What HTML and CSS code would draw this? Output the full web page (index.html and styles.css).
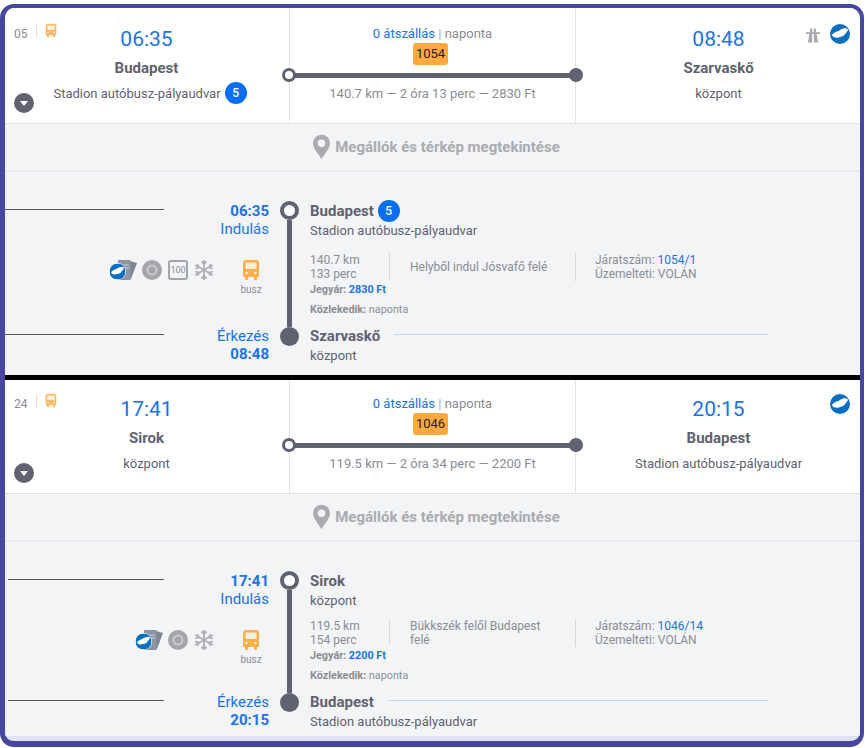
FILE: index.html
```html
<!DOCTYPE html>
<html>
<head>
    <title>Menetrend</title>
    <link rel="stylesheet" href="styles.css">
</head>
<body>
    <svg class="sprites" width="0" height="0">
        <symbol id="bus" viewBox="0 0 18 20">
            <path fill="#fcae4b" d="M4 0h10a3 3 0 0 1 3 3v13a1 1 0 0 1-1 1h-1v2a1 1 0 0 1-1 1h-1a1 1 0 0 1-1-1v-2H6v2a1 1 0 0 1-1 1H4a1 1 0 0 1-1-1v-2H2a1 1 0 0 1-1-1V3a3 3 0 0 1 3-3z"/>
            <path fill="#ffeeda" d="M3.500 2.500h11v6.500h-11z"/>
            <circle fill="#ffeeda" cx="4.500" cy="13" r="1.300"/>
            <circle fill="#ffeeda" cx="13.500" cy="13" r="1.300"/>
        </symbol>
        <symbol id="hungary" viewBox="0 0 20 20">
            <circle fill="#0a6fc2" cx="10" cy="10" r="10"/>
            <path fill="#fff" d="M2 11c.8-1.500 2-2 3.500-3 1.500-.8 3-.7 4.500-2 1.800-1.200 4.500-2 6.500-1.500 1.500.4 1.800 1.500.8 2.800-1 1.200-1.800 2.200-2.800 3.500-1.200 1.500-3 1.700-5 2.400-1.800.6-3.800.8-5.300.1C3.300 13.300 2.300 12.200 2 11z"/>
        </symbol>
        <symbol id="highway" viewBox="0 0 15 15">
            <path fill="#a9abb0" d="M4.500 0h2.200v4h1.600V0h2.200l.5 4H15v2h-3.600L13 15H8.400V6H6.600v9H2L3.600 6H0V4h4z"/>
        </symbol>
        <symbol id="ticket" viewBox="0 0 28 20">
            <path fill="#7f8794" d="M21 1l7 2-6 16-5-1z"/>
            <path fill="#8f96a3" d="M9 0h12.500v20H9z"/>
            <path stroke="#c9ccd2" d="M15 5h5M15 8h5"/>
            <circle fill="#fff" cx="8.500" cy="11.500" r="8.500"/>
            <use href="#hungary" x="0.500" y="3.500" width="16" height="16"/>
        </symbol>
        <symbol id="disc" viewBox="0 0 20 20">
            <circle fill="#a3a5a9" cx="10" cy="10" r="10"/>
            <circle fill="none" stroke="#c9cbcf" stroke-width="2" cx="10" cy="10" r="4.500"/>
        </symbol>
        <symbol id="snow" viewBox="0 0 20 20">
            <g fill="none" stroke="#aeb0b5" stroke-width="1.800">
                <path d="M10 0v20M1.300 5l17.400 10M1.300 15l17.400-10"/>
                <path d="M7.500 1.500L10 4l2.500-2.500M7.500 18.500L10 16l2.500 2.500"/>
                <path d="M1.200 8.500l3.400-.9-.9-3.400M18.800 11.500l-3.400.9.900 3.400M1.200 11.500l3.400.9-.9 3.400M18.800 8.500l-3.400-.9.900-3.400"/>
            </g>
        </symbol>
    </svg>

    <div class="frame">
        <div class="trip">
            <div class="summary">
                <div class="end end-from">
                    <div class="line-no"><span>05</span><svg class="bus-small"><use href="#bus"/></svg></div>
                    <div class="toggle"></div>
                    <div class="clock">06:35</div>
                    <div class="city">Budapest</div>
                    <div class="stop stop-shift">Stadion autóbusz-pályaudvar <span class="platform">5</span></div>
                </div>
                <div class="middle">
                    <div class="changes"><span class="blue">0 átszállás</span> <span class="pipe">|</span> naponta</div>
                    <div class="route-no">1054</div>
                    <div class="track"></div>
                    <div class="totals">140.7 km — 2 óra 13 perc — 2830 Ft</div>
                </div>
                <div class="end end-to">
                    <div class="badges"><svg class="icon-highway"><use href="#highway"/></svg><svg class="icon-hu"><use href="#hungary"/></svg></div>
                    <div class="clock">08:48</div>
                    <div class="city">Szarvaskő</div>
                    <div class="stop">központ</div>
                </div>
            </div>
            <div class="map-link">
                <svg class="pin" viewBox="0 0 18 26"><path fill="#a9abb0" fill-rule="evenodd" d="M9 0a9 9 0 0 1 9 9c0 6-6 11-9 17C6 20 0 15 0 9a9 9 0 0 1 9-9zm0 5a4 4 0 1 0 0 8 4 4 0 0 0 0-8z"/></svg>
                Megállók és térkép megtekintése
            </div>
            <div class="detail detail-first">
                <div class="side dep">
                    <div class="rule"></div>
                    <div class="times"><b>06:35</b><br>Indulás</div>
                </div>
                <div class="axis"><i class="ring"></i><i class="bar"></i><i class="dot"></i></div>
                <div class="place">
                    <div class="place-name">Budapest <span class="platform">5</span></div>
                    <div class="place-sub">Stadion autóbusz-pályaudvar</div>
                </div>
                <div class="services">
                    <svg class="svc-ticket"><use href="#ticket"/></svg>
                    <svg class="svc"><use href="#disc"/></svg>
                    <span class="limit">100</span>
                    <svg class="svc"><use href="#snow"/></svg>
                    <div class="vehicle"><svg class="bus-big"><use href="#bus"/></svg><span>busz</span></div>
                </div>
                <div class="info">
                    <div class="info-row">
                        <div class="info-a">140.7 km<br>133 perc</div>
                        <div class="info-b">Helyből indul Jósvafő felé</div>
                        <div class="info-c">Járatszám: <span class="blue">1054/1</span><br>Üzemelteti: VOLÁN</div>
                    </div>
                    <div class="price"><b>Jegyár:</b> <b class="blue">2830 Ft</b></div>
                    <div class="runs"><b>Közlekedik:</b> naponta</div>
                </div>
                <div class="side arr">
                    <div class="rule"></div>
                    <div class="times">Érkezés<br><b>08:48</b></div>
                </div>
                <div class="place">
                    <div class="place-name">Szarvaskő<i class="thin"></i></div>
                    <div class="place-sub">központ</div>
                </div>
            </div>
        </div>

        <div class="trip">
            <div class="summary">
                <div class="end end-from">
                    <div class="line-no"><span>24</span><svg class="bus-small"><use href="#bus"/></svg></div>
                    <div class="toggle"></div>
                    <div class="clock">17:41</div>
                    <div class="city">Sirok</div>
                    <div class="stop">központ</div>
                </div>
                <div class="middle">
                    <div class="changes"><span class="blue">0 átszállás</span> <span class="pipe">|</span> naponta</div>
                    <div class="route-no">1046</div>
                    <div class="track"></div>
                    <div class="totals">119.5 km — 2 óra 34 perc — 2200 Ft</div>
                </div>
                <div class="end end-to">
                    <div class="badges"><svg class="icon-hu"><use href="#hungary"/></svg></div>
                    <div class="clock">20:15</div>
                    <div class="city">Budapest</div>
                    <div class="stop">Stadion autóbusz-pályaudvar</div>
                </div>
            </div>
            <div class="map-link">
                <svg class="pin" viewBox="0 0 18 26"><path fill="#a9abb0" fill-rule="evenodd" d="M9 0a9 9 0 0 1 9 9c0 6-6 11-9 17C6 20 0 15 0 9a9 9 0 0 1 9-9zm0 5a4 4 0 1 0 0 8 4 4 0 0 0 0-8z"/></svg>
                Megállók és térkép megtekintése
            </div>
            <div class="detail detail-second">
                <div class="side dep">
                    <div class="rule"></div>
                    <div class="times"><b>17:41</b><br>Indulás</div>
                </div>
                <div class="axis"><i class="ring"></i><i class="bar"></i><i class="dot"></i></div>
                <div class="place">
                    <div class="place-name">Sirok</div>
                    <div class="place-sub">központ</div>
                </div>
                <div class="services">
                    <svg class="svc-ticket"><use href="#ticket"/></svg>
                    <svg class="svc"><use href="#disc"/></svg>
                    <svg class="svc"><use href="#snow"/></svg>
                    <div class="vehicle"><svg class="bus-big"><use href="#bus"/></svg><span>busz</span></div>
                </div>
                <div class="info">
                    <div class="info-row">
                        <div class="info-a">119.5 km<br>154 perc</div>
                        <div class="info-b">Bükkszék felől Budapest felé</div>
                        <div class="info-c">Járatszám: <span class="blue">1046/14</span><br>Üzemelteti: VOLÁN</div>
                    </div>
                    <div class="price"><b>Jegyár:</b> <b class="blue">2200 Ft</b></div>
                    <div class="runs"><b>Közlekedik:</b> naponta</div>
                </div>
                <div class="side arr">
                    <div class="rule"></div>
                    <div class="times">Érkezés<br><b>20:15</b></div>
                </div>
                <div class="place">
                    <div class="place-name">Budapest<i class="thin"></i></div>
                    <div class="place-sub">Stadion autóbusz-pályaudvar</div>
                </div>
            </div>
        </div>
    </div>
</body>
</html>
```

FILE: styles.css
```css
:root {
    --frame: #46479e;
    --panel: #f2f4f6;
    --divider: #e0e2e6;
    --dark: #5f6270;
    --muted: #8a8d94;
    --blue: #1a73e8;
    --orange: #ffa940;
}

body {
    margin: 0;
    background: white;
    font-family: Roboto, sans-serif;
    color: var(--dark);
}

.sprites {
    display: block;
}

.blue {
    color: var(--blue);
}

.frame {
    box-sizing: border-box;
    width: 864px;
    height: 743px;
    margin-top: 4px;
    border: 4px solid var(--frame);
    border-width: 4px 4px 6px 5px;
    border-radius: 14px;
    background: #e0e2f2;
    overflow: hidden;
}

.trip + .trip {
    border-top: 5px solid black;
}

/* Summary row */
.summary {
    display: grid;
    grid-template-columns: 284px 287px 1fr;
    height: 115px;
    background: white;
    border-bottom: 1px solid var(--divider);
}

.trip + .trip .summary {
    height: 113px;
}

.end {
    position: relative;
    display: flex;
    flex-direction: column;
    align-items: center;
    padding-top: 19px;
}

.end-from {
    padding-right: 1px;
}

.end-to {
    padding-left: 1px;
}

.trip + .trip .end {
    padding-top: 17px;
}

.clock {
    height: 24px;
    line-height: 24px;
    font-size: 21px;
    color: var(--blue);
}

.city {
    margin-top: 8px;
    line-height: 18px;
    font-size: 15px;
    font-weight: 700;
}

.stop {
    display: flex;
    align-items: center;
    gap: 4px;
    height: 22px;
    margin-top: 5px;
    font-size: 13px;
}

.stop-shift {
    margin-left: 7px;
}

.platform {
    display: inline-block;
    width: 22px;
    height: 22px;
    line-height: 22px;
    border-radius: 50%;
    background: #0a6ef5;
    color: white;
    font-size: 12px;
    font-weight: 500;
    text-align: center;
}

.line-no {
    position: absolute;
    top: 16px;
    left: 9px;
    display: flex;
    align-items: flex-start;
    font-size: 12px;
    line-height: 20px;
    color: var(--muted);
}

.trip + .trip .line-no {
    top: 14px;
}

.line-no span {
    height: 14px;
    line-height: 20px;
    padding-right: 8px;
    border-right: 1px solid var(--divider);
    margin-right: 8px;
}

.bus-small {
    width: 12px;
    height: 15px;
    margin-top: -1px;
    opacity: 0.85;
}

.toggle {
    position: absolute;
    top: 85px;
    left: 9px;
    width: 20px;
    height: 20px;
    border-radius: 50%;
    background: var(--dark);
}

.trip + .trip .toggle {
    top: 83px;
}

.toggle::after {
    content: "";
    position: absolute;
    top: 8px;
    left: 6px;
    border: 4px solid transparent;
    border-top: 5px solid white;
    border-bottom: 0;
}

.middle {
    position: relative;
    display: flex;
    flex-direction: column;
    align-items: center;
    padding-top: 18px;
    border-left: 1px solid var(--divider);
    border-right: 1px solid var(--divider);
    font-size: 13px;
    color: var(--muted);
}

.trip + .trip .middle {
    padding-top: 16px;
}

.changes {
    line-height: 16px;
}

.pipe {
    color: #a9abb0;
}

.route-no {
    width: 35px;
    height: 22px;
    line-height: 22px;
    margin: 1px 4px 0 0;
    border-radius: 3px;
    background: var(--orange);
    color: #222;
    text-align: center;
}

.track {
    position: relative;
    align-self: stretch;
    height: 5px;
    margin-top: 8px;
    background: var(--dark);
}

.track::before,
.track::after {
    content: "";
    position: absolute;
    box-sizing: border-box;
    top: -5px;
    width: 14px;
    height: 14px;
    border-radius: 50%;
    background: var(--dark);
}

.track::before {
    left: -8px;
    border: 3px solid var(--dark);
    background: white;
}

.track::after {
    right: -8px;
}

.totals {
    margin-top: 8px;
    line-height: 16px;
}

.badges {
    position: absolute;
    top: 16px;
    right: 10px;
    display: flex;
    align-items: center;
    gap: 10px;
}

.trip + .trip .badges {
    top: 14px;
}

.icon-highway {
    width: 14px;
    height: 15px;
    margin-top: 3px;
}

.icon-hu {
    width: 20px;
    height: 20px;
}

.map-link {
    display: flex;
    align-items: center;
    justify-content: center;
    gap: 5px;
    height: 46px;
    padding-left: 8px;
    background: var(--panel);
    border-bottom: 2px solid #e8eaed;
    font-size: 15px;
    font-weight: 700;
    color: #a9abb0;
}

.pin {
    width: 17px;
    height: 26px;
}

/* Expanded stops */
.detail {
    display: grid;
    grid-template-columns: 264px 19px 1fr;
    column-gap: 11px;
    box-sizing: border-box;
    background: var(--panel);
}

.detail-first {
    height: 203px;
    padding-top: 29px;
    grid-template-rows: 37px 88px auto;
}

.detail-second {
    height: 194px;
    padding-top: 29px;
    grid-template-rows: 38px 83px auto;
}

.side {
    display: flex;
    justify-content: space-between;
    align-items: flex-start;
}

.rule {
    width: 159px;
    height: 1px;
    margin-top: 8px;
    background: #555;
}

.detail-second .rule {
    width: 156px;
    margin-left: 3px;
}

.times {
    margin-top: 1px;
    line-height: 18px;
    font-size: 15px;
    color: var(--blue);
    text-align: right;
}

.axis {
    grid-column: 2;
    grid-row: 1 / 4;
    display: flex;
    flex-direction: column;
    align-items: center;
    height: 145px;
}

.detail-second .axis {
    height: 141px;
}

.ring,
.dot {
    box-sizing: border-box;
    flex: none;
    width: 19px;
    height: 19px;
    border-radius: 50%;
    background: var(--dark);
}

.ring {
    border: 4px solid var(--dark);
    background: white;
}

.bar {
    flex: 1;
    width: 5px;
    background: var(--dark);
}

.place-name {
    display: flex;
    align-items: center;
    gap: 4px;
    height: 20px;
    font-size: 15px;
    font-weight: 700;
}

.place-sub {
    margin-top: 1px;
    line-height: 18px;
    font-size: 13px;
}

.thin {
    flex: 1;
    height: 1px;
    margin: 0 92px 3px 10px;
    background: #bcd8f2;
}

.services {
    grid-column: 1;
    grid-row: 2;
    display: flex;
    justify-content: flex-end;
    align-items: flex-start;
    gap: 6px;
    padding-top: 22px;
}

.detail-second .services {
    padding-top: 21px;
}

.svc {
    width: 20px;
    height: 20px;
}

.svc-ticket {
    width: 28px;
    height: 20px;
    margin-right: -1px;
}

.limit {
    box-sizing: border-box;
    width: 20px;
    height: 20px;
    line-height: 16px;
    border: 2px solid #a3a5a9;
    border-radius: 3px;
    font-size: 9px;
    color: #8a8d94;
    text-align: center;
}

.vehicle {
    display: flex;
    flex-direction: column;
    align-items: center;
    width: 24px;
    margin: 0 6px 0 19px;
    font-size: 10px;
    color: var(--muted);
}

.vehicle span {
    margin-top: 4px;
}

.bus-big {
    width: 18px;
    height: 20px;
}

.info {
    grid-column: 3;
    grid-row: 2;
    padding-top: 15px;
    font-size: 12px;
    color: var(--muted);
}

.detail-second .info {
    padding-top: 10px;
}

.info-row {
    display: flex;
    line-height: 14px;
}

.info-a {
    width: 79px;
    height: 26px;
    border-right: 1px solid #d5d7db;
}

.info-b {
    display: flex;
    align-items: center;
    box-sizing: border-box;
    width: 186px;
    padding: 0 24px 0 20px;
    border-right: 1px solid #d5d7db;
}

.info-c {
    padding-left: 19px;
}

.price {
    margin-top: 2px;
    line-height: 14px;
    font-size: 10.800px;
}

.runs {
    margin-top: 6px;
    line-height: 14px;
    font-size: 10.800px;
}
```
